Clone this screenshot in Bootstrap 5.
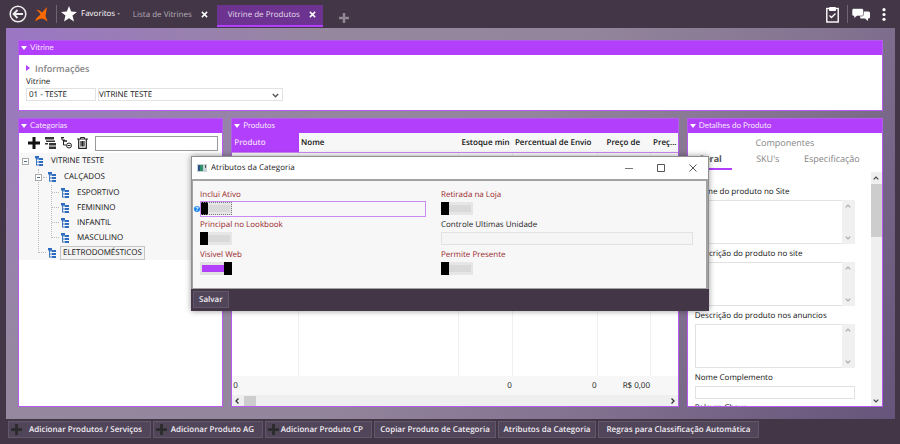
<!DOCTYPE html>
<html lang="pt-BR">
<head>
<meta charset="utf-8">
<meta name="viewport" content="width=device-width, initial-scale=1">
<title>Vitrine de Produtos</title>
<link href="https://cdn.jsdelivr.net/npm/bootstrap@5.3.0/dist/css/bootstrap.min.css" rel="stylesheet">
<style>
:root{--dark:#433647;--vio:#b23ffc;--line:#e2e2e2}
body{font-family:"Open Sans","Noto Sans",sans-serif;font-size:8px;line-height:12px;color:#111;background:var(--dark);text-rendering:geometricPrecision}
button,input,select,textarea{font:inherit;color:inherit;text-rendering:inherit}
svg{display:block;flex:none}
.topbar{height:28px;padding:0 6px 0 9px;color:#fff}
.topbar button,.flat{background:none;border:0;padding:0;color:inherit}
.vline{width:1px;height:18px;background:#6f6574}
.doctab{height:22px;padding:0 9px 3px 9px;gap:9px;color:#b5aeb8}
.doctab a{color:inherit;text-decoration:none}
.doctab.current{background:#6c3490;border-bottom:2px solid var(--vio);color:#e6dcec;padding:0 7px 1px 11px}
.workspace{margin:0 5px 0 6px;padding:12px;gap:7px;min-height:0;
 background:radial-gradient(ellipse 320px 340px at 0 0,#9b76c4 0,#9b76c400 100%),linear-gradient(125deg,#988aa2 0,#93859b 50%,#877693 68%,#66547a 100%)}
.pane{background:#fff;border:1px solid #b45cf0;min-height:0;min-width:0}
.pane-title{height:14px;background:var(--vio);color:#f6e6ff;font-family:Lato,"Open Sans",sans-serif;font-size:8px;line-height:12px;padding:0 5px 0 2px;margin:0;font-weight:400;gap:3px}
.pane-title::before{content:"";border:3px solid transparent;border-top:4px solid #fff;border-bottom:0;align-self:center}
.pane-info{padding:4px 7px 9px}
.columns{display:grid;grid-template-columns:205fr 447fr 196fr;grid-template-rows:minmax(0,1fr);gap:8px;min-height:0}
.info{color:#858585;font-weight:600;font-size:9px;gap:5px;margin-bottom:1px}
.info::before{content:"";border:3px solid transparent;border-left:4px solid var(--vio);border-right:0;margin-bottom:3px}
.field{border:1px solid var(--line);border-radius:0;background:#fff;height:13px;padding:0 3px;outline:0;min-width:0}
select.field{appearance:none;padding:0;width:185px}
.cod{width:70px;margin-right:2px;padding:0 2px}
.pick{position:relative}
.pick svg{position:absolute;right:4px;top:5px;color:#555}
.tools{height:20px;padding:0 4px 0 9px;gap:5px}
.search{border:1px solid #9a9a9a;height:15px;margin-left:2px}
.tree,.tree ul{list-style:none;margin:0;padding:0}
.tree li li{padding-left:13px}
.tree .node{height:15px;gap:3px;padding-left:13px;position:relative}
.tree .folder{height:16px}
.tree>li{padding-left:3px;background:#f7f7f7}
.tree .exp{width:7px;height:7px;border:1px solid #aaa;background:#fff;position:absolute;left:0}
.tree .exp::after{content:"";position:absolute;left:1px;right:1px;top:2px;height:1px;background:#567}
.kids{position:relative}
.kids::before{content:"";position:absolute;left:16px;top:0;bottom:7px;border-left:1px dotted #bbb}
.kids>li>.node::before{content:"";position:absolute;left:4px;width:7px;border-top:1px dotted #bbb}
.kids>li>.folder::before{left:8px;width:4px}
.chosen{border:1px solid #c4c4c4;background:#f3f3f3;padding:0 2px}
.grid-tbl{table-layout:fixed;width:100%;height:100%;border-collapse:separate;border-spacing:0}
.grid-tbl th{height:20px;padding:0 2px;background:#f7f7f7;border-bottom:1px solid #c98af5;font-weight:600;white-space:nowrap;overflow:hidden}
.grid-tbl td{border-right:1px solid #f0f0f0;padding:0 1px;text-align:right}
.grid-tbl td:last-child{border-right:0}
.grid-tbl tfoot td{height:19px;background:#f7f7f7;border:0}
.grid-tbl .sorted{background:var(--vio);color:#f0dcff}
.grid-tbl th.w6{padding-right:6px}.grid-tbl th.w11{padding-right:11px}
.hbar{height:11px;background:#efefef;padding:0 3px;gap:5px}
.hbar i{width:12px;height:10px;background:#cdcdcd}
.subtabs a{color:#858585;text-decoration:none;font-size:9px;line-height:12px}
.subtabs .row2{display:grid;grid-template-columns:44px 52px 1fr;padding:3px 12px 0 10px}
.subtabs .here{color:#555;font-weight:700}
.here-line{width:33px;height:2px;background:var(--vio);margin:3px 0 2px 11px}
.form-col{padding:14px 16px 0 7px;min-width:0;overflow:hidden}
.form-col label{font-weight:500}
.form-col label,.info-label{display:block;line-height:12px}
.form-col .area{height:44px;margin:2px 0 4px}
.comp{margin:2px 0 3px}
.area textarea{resize:none;border:1px solid var(--line);border-right:0;border-radius:0;outline:0;min-width:0;padding:1px 3px;overflow:hidden}
.area span{width:13px;background:#f0f0f0;padding:4px 0;color:#aaa}
.vbar{width:11px;background:#efefef;color:#444;padding:4px 0 3px}
.vbar i{display:block;width:100%;height:53px;background:#cdcdcd;margin-top:4px}
.dialog-win{position:absolute;left:0;right:0;top:156px;margin:0 auto;width:518px;background:#fff;box-shadow:0 0 6px #0006;border:1px solid #8f8f8f;border-bottom:0}
.dialog-head{height:22px;padding:0 11px 0 5px;gap:4px;color:#222}
.dialog-head h2{font-size:8px;margin:0;font-weight:400;line-height:12px}
.wbtns{gap:24px}
.dialog-body{background:#f7f7f7;border:1px solid #a2a2a2;border-width:2px 2px 1px 1px;padding:8px 14px 11px 7px;display:grid;grid-template-columns:226px 252px;column-gap:15px;row-gap:2px}
.dialog-body label{display:block;color:#9a1f2b;height:12px;font-weight:500}
.dialog-body label.plain{color:#222}
.slot{height:16px;padding:1px 0;position:relative}
.slot.focus{outline:1px solid #c98af5;outline-offset:-1px}
.slot .field{background:#f5f5f5;height:13px}
.toggle{appearance:none;display:block;margin:0;width:32px;height:13px;border:0;background:linear-gradient(#000,#000) 0 0/8px 13px no-repeat,linear-gradient(#d9d9d9,#d9d9d9) 8px 3px/22px 7px no-repeat,#e6e6e6}
.toggle:checked{background:linear-gradient(#000,#000) 100% 0/8px 13px no-repeat,linear-gradient(var(--vio),var(--vio)) 2px 3px/22px 7px no-repeat,#e2e2e2}
.focus .toggle{outline:1px dotted #777;outline-offset:-1px}
.help{position:absolute;left:-6px;top:5px;width:6px;height:6px;border-radius:50%;background:#1683ec;color:#fff;font-size:6px;line-height:6px;text-align:center;font-weight:700}
.dialog-foot{background:var(--dark);height:22px;margin:0 -1px;padding:2px}
.act{background:#51455a;border:1px solid #63586b;color:#f2eef4;font-weight:600;height:17px;padding:0 5px;white-space:nowrap;line-height:12px;display:flex;align-items:center;justify-content:center}
.act svg{color:#2b2b2b}
.bottombar{height:25px;padding:2px 8px;gap:2px}
.bottombar .act{justify-content:space-between;padding:0 8px 0 2px}
.bottombar .only{justify-content:center;padding:0}
.b1{width:143px}.b2{width:110px}.b3{width:107px}.b4{width:122px}.b5{width:98px}.b6{width:161px}
</style>
<script src="https://cdn.jsdelivr.net/npm/bootstrap@5.3.0/dist/js/bootstrap.bundle.min.js"></script>
</head>
<body class="vh-100 d-flex flex-column overflow-hidden position-relative">
<svg class="d-none">
 <symbol id="up" viewBox="0 0 6 4"><path d="M.7 3.300 3 1l2.300 2.300" fill="none" stroke="currentColor" stroke-width="1.200"/></symbol>
 <symbol id="down" viewBox="0 0 6 4"><path d="M.7.7 3 3 5.300.7" fill="none" stroke="currentColor" stroke-width="1.200"/></symbol>
 <symbol id="plus" viewBox="0 0 12 12"><path d="M4.500 0h3v4.500H12v3H7.500V12h-3V7.500H0v-3h4.500z" fill="currentColor"/></symbol>
 <symbol id="x" viewBox="0 0 8 8"><path d="M1 1l6 6M7 1 1 7" stroke="currentColor" stroke-width="1.700"/></symbol>
 <symbol id="tree" viewBox="0 0 9 10"><path d="M1.500 1v8.500M1.500 3H5M1.500 6H5M1.500 9H5" stroke="#3f78c0" fill="none"/><path d="M0 0h4v2.500H0zM4 2h4v2H4zM4 5h4v2H4zM4 8h4v2H4z" fill="#2d6cc0"/></symbol>
</svg>

<header class="topbar d-flex align-items-center flex-shrink-0">
 <button type="button" aria-label="Voltar"><svg width="18" height="18" viewBox="0 0 18 18" fill="none" stroke="#eee" stroke-width="1.500"><circle cx="9" cy="9" r="7.800"/><path d="M14 9H5M8.500 5 4.500 9l4 4" stroke-width="1.800"/></svg></button>
 <svg class="ms-2" width="13" height="15" viewBox="0 0 13 15"><path d="M1 2.500Q5 3 7 5.500L12 0 10.500 9 12.500 14.500Q9 11.500 6.500 11.500 3 12 0 14.500 1.500 10 5.500 7.500 4 4.500 1 2.500z" fill="#ff6a00"/></svg>
 <span class="vline ms-2 me-1"></span>
 <button type="button" class="d-flex align-items-center gap-1"><svg width="16" height="16" viewBox="0 0 16 16"><path d="M8 0l2.200 5.500 5.800.4-4.500 3.700L13 15.500 8 12.200 3 15.500l1.500-5.900L0 5.900l5.800-.4z" fill="#fff"/></svg><span>Favoritos -</span></button>
 <nav class="d-flex align-self-stretch align-items-center pt-1 ms-1" aria-label="Documentos abertos">
  <div class="doctab d-flex align-items-center"><a href="#lista">Lista de Vitrines</a><button type="button" aria-label="Fechar"><svg width="7" height="7" class="text-white"><use href="#x"/></svg></button></div>
  <div class="doctab current d-flex align-items-center"><a href="#produtos">Vitrine de Produtos</a><button type="button" aria-label="Fechar"><svg width="7" height="7" class="text-white"><use href="#x"/></svg></button></div>
 </nav>
 <button type="button" class="ms-3 mt-2" aria-label="Nova aba"><svg width="10" height="10" style="color:#8f8892"><use href="#plus"/></svg></button>
 <div class="d-flex align-items-center gap-1 ms-auto">
  <button type="button" class="me-1" aria-label="Tarefas"><svg width="13" height="17" viewBox="0 0 13 17" fill="none" stroke="#fff"><rect x=".8" y="2.500" width="11.400" height="13.500" stroke-width="1.400"/><path d="M3.500 1.500h6v3h-6z" fill="#fff"/><path d="M3.500 9.500l2 2 4-4" stroke-width="1.300"/></svg></button>
  <span class="vline"></span>
  <button type="button" aria-label="Mensagens"><svg width="18" height="13" viewBox="0 0 18 13"><path d="M9 3.500h7.500q1.500 0 1.500 1.500v4q0 1.500-1.500 1.500H16V13l-3-2.500H9.500Q8 10.500 8 9z" fill="#fff"/><path d="M1.500.5h8.500q1.500 0 1.500 1.500v4.500Q11.500 8 10 8H5l-3 2.500V8H1.500Q0 8 0 6.500V2Q0 .5 1.500.5z" fill="#fff" stroke="#433647" stroke-width=".6"/></svg></button>
  <button type="button" class="px-2" aria-label="Mais"><svg width="4" height="13" viewBox="0 0 4 13" fill="#fff"><circle cx="2" cy="1.700" r="1.600"/><circle cx="2" cy="6.500" r="1.600"/><circle cx="2" cy="11.300" r="1.600"/></svg></button>
 </div>
</header>

<main class="workspace d-flex flex-column flex-grow-1">
 <section class="pane flex-shrink-0">
  <h1 class="pane-title d-flex">Vitrine</h1>
  <div class="pane-info">
   <div class="info d-flex align-items-center pt-1">Informações</div>
   <label for="cod" class="info-label">Vitrine</label>
   <div class="d-flex">
    <input id="cod" class="field cod" value="01 - TESTE">
    <div class="pick"><select class="field" aria-label="Nome da vitrine"><option>VITRINE TESTE</option></select><svg width="7" height="5"><use href="#down"/></svg></div>
   </div>
  </div>
 </section>

 <div class="columns flex-grow-1">
  <section class="pane">
   <h2 class="pane-title d-flex">Categorias</h2>
   <div class="tools d-flex align-items-center">
    <button type="button" class="flat" aria-label="Adicionar"><svg width="12" height="12"><use href="#plus"/></svg></button>
    <button type="button" class="flat" aria-label="Duplicar"><svg width="11" height="12" viewBox="0 0 11 12" fill="#333"><path d="M0 0h9v2.500H0zM1 3.500h9V5H1zM0 6h3v1.500H0zM4 6h7v2.500H4zM4 9.500h7V12H4z"/></svg></button>
    <button type="button" class="flat" aria-label="Mover"><svg width="11" height="12" viewBox="0 0 11 12" fill="none" stroke="#222"><path d="M1 0v3h3M2.500 3v5H5"/><path d="M0 .5h3M3 4h3" stroke-width="1.500"/><circle cx="8" cy="8.500" r="2.500"/><path d="M6.500 8.500h3"/></svg></button>
    <button type="button" class="flat" aria-label="Excluir"><svg width="11" height="12" viewBox="0 0 11 12" fill="none" stroke="#222"><path d="M0 2h11M3.500 2V.5h4V2"/><path d="M1.700 2v9.300h7.600V2M4 4v5.500M5.500 4v5.500M7 4v5.500" stroke-width="1.200"/></svg></button>
    <input class="field flex-grow-1 search" aria-label="Buscar categoria">
   </div>
   <ul class="tree">
    <li><div class="node folder d-flex align-items-center"><span class="exp"></span><svg width="9" height="10"><use href="#tree"/></svg><span class="ps-1">VITRINE TESTE</span></div>
     <ul class="kids">
      <li><div class="node folder d-flex align-items-center"><span class="exp"></span><svg width="9" height="10"><use href="#tree"/></svg><span class="ps-1">CALÇADOS</span></div>
       <ul class="kids">
        <li><div class="node d-flex align-items-center"><svg width="9" height="10"><use href="#tree"/></svg><span class="ps-1">ESPORTIVO</span></div></li>
        <li><div class="node d-flex align-items-center"><svg width="9" height="10"><use href="#tree"/></svg><span class="ps-1">FEMININO</span></div></li>
        <li><div class="node d-flex align-items-center"><svg width="9" height="10"><use href="#tree"/></svg><span class="ps-1">INFANTIL</span></div></li>
        <li><div class="node d-flex align-items-center"><svg width="9" height="10"><use href="#tree"/></svg><span class="ps-1">MASCULINO</span></div></li>
       </ul></li>
      <li><div class="node d-flex align-items-center"><svg width="9" height="10"><use href="#tree"/></svg><span class="chosen">ELETRODOMÉSTICOS</span></div></li>
     </ul></li>
   </ul>
  </section>

  <section class="pane d-flex flex-column">
   <h2 class="pane-title d-flex flex-shrink-0">Produtos</h2>
   <div class="flex-grow-1">
    <table class="grid-tbl">
     <colgroup><col style="width:15%"><col style="width:36%"><col style="width:12%"><col style="width:19%"><col style="width:12%"><col style="width:6%"></colgroup>
     <thead><tr><th class="sorted">Produto</th><th>Nome</th><th class="text-end w6">Estoque min</th><th class="text-end w11">Percentual de Envio</th><th class="text-end w11">Preço de</th><th>Preç...</th></tr></thead>
     <tbody><tr><td></td><td></td><td></td><td></td><td></td><td></td></tr></tbody>
     <tfoot><tr><td class="text-start">0</td><td></td><td>0</td><td>0</td><td>R$ 0,00</td><td></td></tr></tfoot>
    </table>
   </div>
   <div class="hbar d-flex align-items-center flex-shrink-0"><svg width="4" height="6" viewBox="0 0 4 6" fill="none" stroke="#333" stroke-width="1.300"><path d="M3.500.5 1 3l2.500 2.500"/></svg><i></i><svg class="ms-auto" width="4" height="6" viewBox="0 0 4 6" fill="none" stroke="#333" stroke-width="1.300"><path d="M.5.5 3 3 .5 5.500"/></svg></div>
  </section>

  <section class="pane d-flex flex-column">
   <h2 class="pane-title d-flex flex-shrink-0">Detalhes do Produto</h2>
   <nav class="subtabs flex-shrink-0" aria-label="Detalhes">
    <div class="text-center pt-1"><a href="#comp">Componentes</a></div>
    <div class="row2"><a href="#geral" class="here">Geral</a><a href="#sku" class="text-center">SKU's</a><a href="#esp" class="text-center">Especificação</a></div>
    <div class="here-line"></div>
   </nav>
   <div class="d-flex flex-grow-1 overflow-hidden">
    <div class="form-col flex-grow-1">
     <label for="t1">Nome do produto no Site</label>
     <div class="area d-flex"><textarea id="t1" class="flex-grow-1"></textarea><span class="d-flex flex-column justify-content-between align-items-center"><svg width="6" height="4"><use href="#up"/></svg><svg width="6" height="4"><use href="#down"/></svg></span></div>
     <label for="t2">Descrição do produto no site</label>
     <div class="area d-flex"><textarea id="t2" class="flex-grow-1"></textarea><span class="d-flex flex-column justify-content-between align-items-center"><svg width="6" height="4"><use href="#up"/></svg><svg width="6" height="4"><use href="#down"/></svg></span></div>
     <label for="t3">Descrição do produto nos anuncios</label>
     <div class="area d-flex"><textarea id="t3" class="flex-grow-1"></textarea><span class="d-flex flex-column justify-content-between align-items-center"><svg width="6" height="4"><use href="#up"/></svg><svg width="6" height="4"><use href="#down"/></svg></span></div>
     <label for="t4">Nome Complemento</label>
     <input id="t4" class="field w-100 d-block comp">
     <label for="t5">Palavra Chave</label>
     <input id="t5" class="field w-100 d-block">
    </div>
    <div class="vbar d-flex flex-column align-items-center flex-shrink-0"><svg width="6" height="4"><use href="#up"/></svg><i></i><svg class="mt-auto" width="6" height="4"><use href="#down"/></svg></div>
   </div>
  </section>
 </div>
</main>

<footer class="bottombar d-flex flex-shrink-0">
 <button type="button" class="act b1"><svg width="11" height="11"><use href="#plus"/></svg>Adicionar Produtos / Serviços</button>
 <button type="button" class="act b2"><svg width="11" height="11"><use href="#plus"/></svg>Adicionar Produto AG</button>
 <button type="button" class="act b3"><svg width="11" height="11"><use href="#plus"/></svg>Adicionar Produto CP</button>
 <button type="button" class="act only b4">Copiar Produto de Categoria</button>
 <button type="button" class="act only b5">Atributos da Categoria</button>
 <button type="button" class="act only b6">Regras para Classificação Automática</button>
</footer>

<div class="dialog-win" role="dialog" aria-labelledby="dlg">
 <div class="dialog-head d-flex align-items-center">
  <svg width="10" height="8" viewBox="0 0 10 8"><path d="M0 0h10v8H0z" fill="#c8d4d8"/><path d="M1 1h5v6H1z" fill="#2f8f6a"/><path d="M1 1h2v6H1z" fill="#2c4f86"/><path d="M8 1h1v3H8z" fill="#555"/></svg>
  <h2 id="dlg">Atributos da Categoria</h2>
  <div class="d-flex align-items-center ms-auto wbtns">
   <button type="button" class="flat" aria-label="Minimizar"><svg width="8" height="8"><path d="M0 4.500h8" stroke="#777"/></svg></button>
   <button type="button" class="flat" aria-label="Maximizar"><svg width="8" height="8"><path d="M.5.5h7v7h-7z" fill="none" stroke="#555"/></svg></button>
   <button type="button" class="flat" aria-label="Fechar"><svg width="8" height="8"><path d="M.5.5l7 7M7.500.5l-7 7" stroke="#555"/></svg></button>
  </div>
 </div>
 <div class="dialog-body">
  <div><label for="s1">Inclui Ativo</label><div class="slot focus"><span class="help">?</span><input type="checkbox" role="switch" class="toggle" id="s1"></div></div>
  <div><label for="s2">Retirada na Loja</label><div class="slot"><input type="checkbox" role="switch" class="toggle" id="s2"></div></div>
  <div><label for="s3">Principal no Lookbook</label><div class="slot"><input type="checkbox" role="switch" class="toggle" id="s3"></div></div>
  <div><label for="s4" class="plain">Controle Ultimas Unidade</label><div class="slot"><input id="s4" class="field w-100 d-block"></div></div>
  <div><label for="s5">Visivel Web</label><div class="slot"><input type="checkbox" role="switch" class="toggle" id="s5" checked></div></div>
  <div><label for="s6">Permite Presente</label><div class="slot"><input type="checkbox" role="switch" class="toggle" id="s6"></div></div>
 </div>
 <div class="dialog-foot"><button type="button" class="act">Salvar</button></div>
</div>
</body>
</html>
